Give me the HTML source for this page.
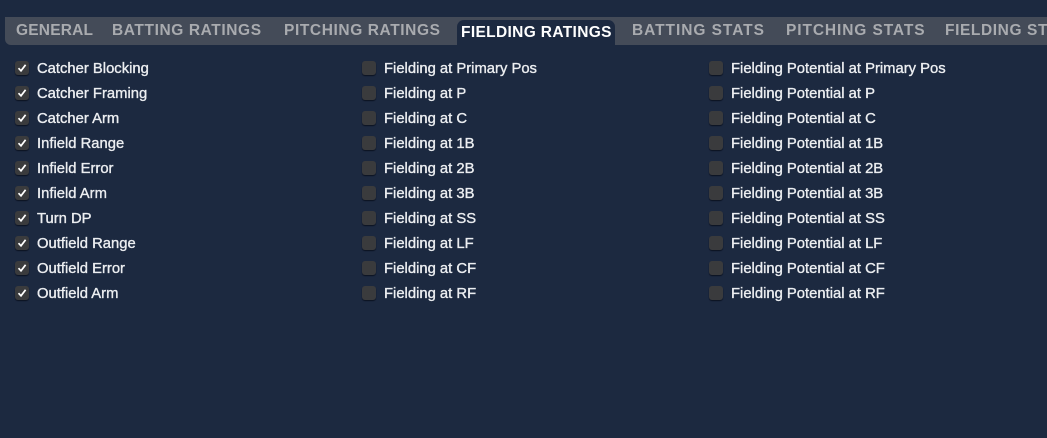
<!DOCTYPE html>
<html><head><style>
body{margin:0;width:1047px;height:438px;background:#1c2940;font-family:"Liberation Sans",sans-serif;overflow:hidden;position:relative}
.bar{position:absolute;left:5px;top:17px;width:1050px;height:28px;background:#444b58;border-radius:0 0 0 6px}
.t{position:absolute;top:22px;font-size:15.5px;font-weight:bold;color:#a9abaf;white-space:nowrap;letter-spacing:0.6px}
.act{position:absolute;left:457px;top:20px;width:158px;height:25px;background:#1c2940;border-radius:7px 7px 0 0}
.cb{position:absolute;width:14px;height:14px;background:#3a3b3d;border-radius:3px;box-shadow:0 1px 1px #0b1220}
.cb svg{position:absolute;left:2px;top:2px}
.l{position:absolute;font-size:14.8px;color:#eceef1;white-space:nowrap;-webkit-text-stroke:0.35px #eceef1}
</style></head><body>
<div class="bar"></div>
<div class="act"></div>
<div class="t" style="left:16px;letter-spacing:0.2px">GENERAL</div>
<div class="t" style="left:112px">BATTING RATINGS</div>
<div class="t" style="left:284px">PITCHING RATINGS</div>
<div class="t" style="left:461px;top:24px;color:#fff;letter-spacing:0.35px">FIELDING RATINGS</div>
<div class="t" style="left:632px;letter-spacing:0.95px">BATTING STATS</div>
<div class="t" style="left:786px;letter-spacing:0.9px">PITCHING STATS</div>
<div class="t" style="left:945px">FIELDING STATS</div>
<div id="c"></div>
<script>
var a=["Catcher Blocking","Catcher Framing","Catcher Arm","Infield Range","Infield Error","Infield Arm","Turn DP","Outfield Range","Outfield Error","Outfield Arm"];
var p=["Primary Pos","P","C","1B","2B","3B","SS","LF","CF","RF"];
var h="";
for(var i=0;i<10;i++){var y=61+i*25;
h+='<div class="cb" style="left:15px;top:'+y+'px"><svg width="10" height="10" viewBox="0 0 10 10"><path d="M1.5 5.2L4 7.8L8.6 1.8" stroke="#fff" stroke-width="1.7" fill="none"/></svg></div><div class="l" style="left:37px;top:'+y+'px">'+a[i]+'</div>';
h+='<div class="cb" style="left:362px;top:'+y+'px"></div><div class="l" style="left:384px;top:'+y+'px">Fielding at '+p[i]+'</div>';
h+='<div class="cb" style="left:709px;top:'+y+'px"></div><div class="l" style="left:731px;top:'+y+'px">Fielding Potential at '+p[i]+'</div>';}
document.getElementById("c").innerHTML=h;
</script>
</body></html>
